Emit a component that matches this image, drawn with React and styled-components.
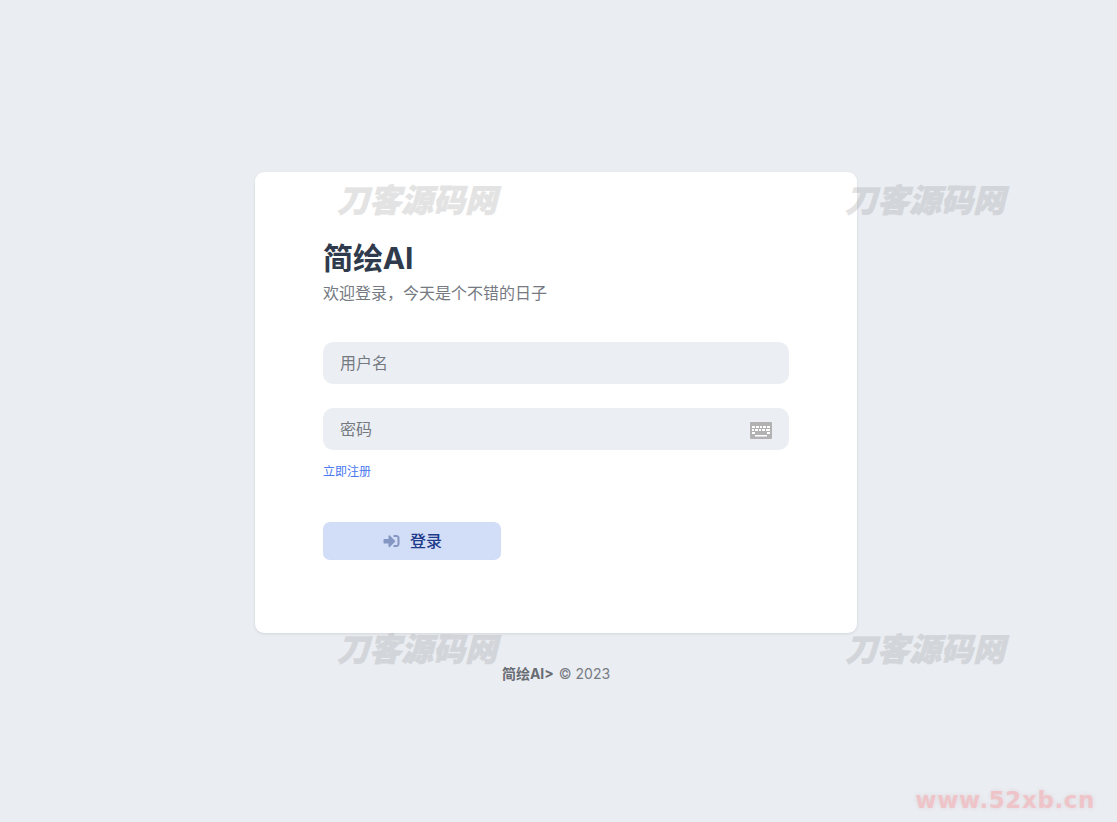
import React from "react";
import styled, { createGlobalStyle } from "styled-components";
import { FaSignInAlt } from "react-icons/fa";

const FONT = `Inter, "Noto Sans CJK SC", sans-serif`;

const Global = createGlobalStyle`
  html, body { margin: 0; padding: 0; height: 100%; }
  body { background: #eaedf2; font-family: ${FONT}; overflow: hidden; }
  * { box-sizing: border-box; }
`;

const Page = styled.div`
  position: relative;
  width: 1117px;
  height: 822px;
  padding: 172px 5px 0 0;
  display: flex;
  flex-direction: column;
  align-items: center;
  overflow: hidden;
`;

const Card = styled.main`
  width: 602px;
  height: 461px;
  background: #fff;
  border-radius: 9px;
  box-shadow: 0 1px 3px rgba(0, 0, 0, 0.1);
  padding: 66px 68px 0;
  display: flex;
  flex-direction: column;
`;

const Title = styled.h1`
  margin: 0;
  font-size: 30px;
  line-height: 40px;
  font-weight: 700;
  letter-spacing: -0.1px;
  color: #2f3a4c;
`;

const Subtitle = styled.p`
  margin: 3px 0 37px;
  font-size: 16px;
  line-height: 24px;
  color: #757a82;
`;

const Field = styled.label`
  display: flex;
  align-items: center;
  justify-content: space-between;
  height: 42px;
  padding: 0 17px;
  background: #ebeef2;
  border-radius: 10px;
  margin-bottom: 24px;
  &:last-of-type { margin-bottom: 0; }
`;

const Input = styled.input`
  flex: 1;
  min-width: 0;
  border: 0;
  outline: 0;
  padding: 0;
  background: transparent;
  font: 400 16px ${FONT};
  color: #2d3748;
  &::placeholder { color: #757a82; opacity: 1; }
`;

const KeyboardIcon = styled.svg`
  width: 22px;
  height: 17px;
  margin-top: 2px;
  flex: none;
`;

const RegisterLink = styled.a`
  align-self: flex-start;
  margin-top: 13px;
  font-size: 12px;
  line-height: 18px;
  color: #4a78ee;
  text-decoration: none;
`;

const LoginButton = styled.button`
  margin-top: 41px;
  width: 178px;
  height: 38px;
  border: 0;
  border-radius: 7px;
  background: #d2ddf7;
  color: #1e3a8a;
  font: 500 16px ${FONT};
  display: flex;
  align-items: center;
  justify-content: center;
  gap: 10px;
  padding: 0 0 2px 1px;
  svg { color: #8496c2; width: 17px; height: 16px; margin-top: 2px; }
`;

const Footer = styled.footer`
  margin-top: 32px;
  font-size: 14px;
  line-height: 18px;
  color: #777b82;
  b { font-weight: 700; margin-right: 5px; color: #696c72; }
`;

const Watermark = styled.span`
  position: absolute;
  left: ${(p) => p.$x}px;
  top: ${(p) => p.$y}px;
  font: italic 900 32px/34px "Noto Sans CJK SC", sans-serif;
  white-space: nowrap;
  color: #787878;
  -webkit-text-stroke: 0.6px #787878;
  opacity: 0.2;
  pointer-events: none;
`;

const Stamp = styled.span`
  position: absolute;
  right: 22px;
  bottom: 8px;
  font: 700 23px/28px "DejaVu Sans", sans-serif;
  letter-spacing: 0.6px;
  color: rgba(240, 195, 200, 0.95);
  text-shadow: 0 0 4px rgba(200, 160, 160, 0.3);
  pointer-events: none;
`;

const marks = [
  [337, 181],
  [845, 181],
  [337, 630],
  [845, 630],
];

export default function App() {
  return (
    <Page>
      <Global />
      <Card>
        <Title>简绘AI</Title>
        <Subtitle>欢迎登录，今天是个不错的日子</Subtitle>
        <Field>
          <Input placeholder="用户名" />
        </Field>
        <Field>
          <Input placeholder="密码" type="password" />
          <KeyboardIcon viewBox="0 0 22 17" aria-hidden="true">
            <rect width="22" height="17" rx="1" fill="#b2b2b2" />
            <path
              d="M2 4h3v2H2zM6 4h3v2H6zM10 4h2v2h-2zM13 4h3v2h-3zM17 4h3v2h-3zM2 7h2v2H2zM5 7h3v2H5zM9 7h2v2H9zM12 7h3v2h-3zM16 7h4v2h-4zM2 10h3v2H2zM17 10h3v2h-3zM5 13h12v1.5H5z"
              fill="#fff"
            />
          </KeyboardIcon>
        </Field>
        <RegisterLink href="#">立即注册</RegisterLink>
        <LoginButton type="button">
          <FaSignInAlt />
          登录
        </LoginButton>
      </Card>
      <Footer>
        <b>简绘AI&gt;</b>© 2023
      </Footer>
      {marks.map(([x, y]) => (
        <Watermark key={`${x}-${y}`} $x={x} $y={y}>
          刀客源码网
        </Watermark>
      ))}
      <Stamp>www.52xb.cn</Stamp>
    </Page>
  );
}
